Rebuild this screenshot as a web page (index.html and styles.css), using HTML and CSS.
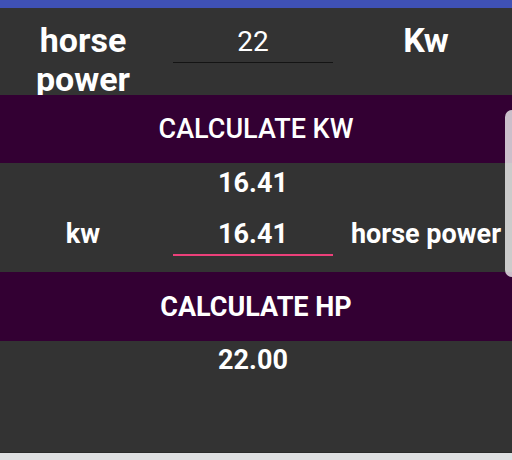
FILE: index.html
```html
<!DOCTYPE html>
<html>
<head>
<meta charset="utf-8">
<link rel="stylesheet" href="styles.css">
</head>
<body>
<div class="screen">
  <div class="statusbar"></div>
  <div class="grid row1">
    <div class="label big">horse power</div>
    <div class="input plain">22</div>
    <div class="label big">Kw</div>
  </div>
  <div class="band medium">CALCULATE KW</div>
  <div class="grid result">
    <div></div>
    <div class="value">16.41</div>
    <div></div>
  </div>
  <div class="grid row2">
    <div class="label">kw</div>
    <div class="input focused">16.41</div>
    <div class="label">horse power</div>
  </div>
  <div class="band bold">CALCULATE HP</div>
  <div class="grid result2">
    <div></div>
    <div class="value">22.00</div>
    <div></div>
  </div>
  <div class="navbar"></div>
  <div class="scrollhint"></div>
</div>
</body>
</html>
```
FILE: styles.css
```css
html, body {
  margin: 0;
  padding: 0;
}
body {
  background: #333333;
  font-family: Roboto, "Noto Sans", sans-serif;
  color: #ffffff;
}
.screen {
  position: relative;
  width: 512px;
  height: 460px;
  display: flex;
  flex-direction: column;
  overflow: hidden;
  background: #333333;
}
.statusbar {
  height: 8px;
  background: #3f51b5;
  flex: none;
}
.grid {
  display: grid;
  grid-template-columns: 166px 160px 1fr;
  column-gap: 7px;
  text-align: center;
  flex: none;
}
.row1 {
  height: 87px;
  overflow: hidden;
}
.label {
  font-weight: 700;
  font-size: 27px;
  line-height: 33px;
  white-space: nowrap;
}
.label.big {
  font-size: 34px;
  line-height: 39px;
  padding-top: 13px;
  white-space: normal;
}
.input.plain {
  font-size: 28px;
  line-height: 32px;
  padding: 18px 0 4px;
  border-bottom: 1px solid #141414;
  align-self: start;
}
.band {
  background: #330033;
  display: flex;
  align-items: center;
  justify-content: center;
  font-size: 27px;
  flex: none;
}
.band.medium {
  height: 68px;
  font-weight: 500;
}
.band.bold {
  height: 69px;
  font-weight: 700;
  font-size: 27px;
  margin-top: 16px;
}
.value {
  font-weight: 700;
  font-size: 27px;
  line-height: 33px;
}
.result {
  padding-top: 4px;
}
.row2 {
  padding-top: 18px;
  align-items: start;
}
.input.focused {
  font-weight: 700;
  font-size: 27px;
  line-height: 33px;
  padding-bottom: 3px;
  border-bottom: 2px solid #ec407a;
}
.result2 {
  padding-top: 3px;
}
.navbar {
  margin-top: auto;
  height: 7px;
  border-top: 1px solid #2a2a2a;
  background: #dfe0e2;
  flex: none;
}
.scrollhint {
  position: absolute;
  left: 505px;
  top: 110px;
  width: 14px;
  height: 167px;
  border-radius: 7px;
  background: rgba(255, 255, 255, 0.75);
}
```
